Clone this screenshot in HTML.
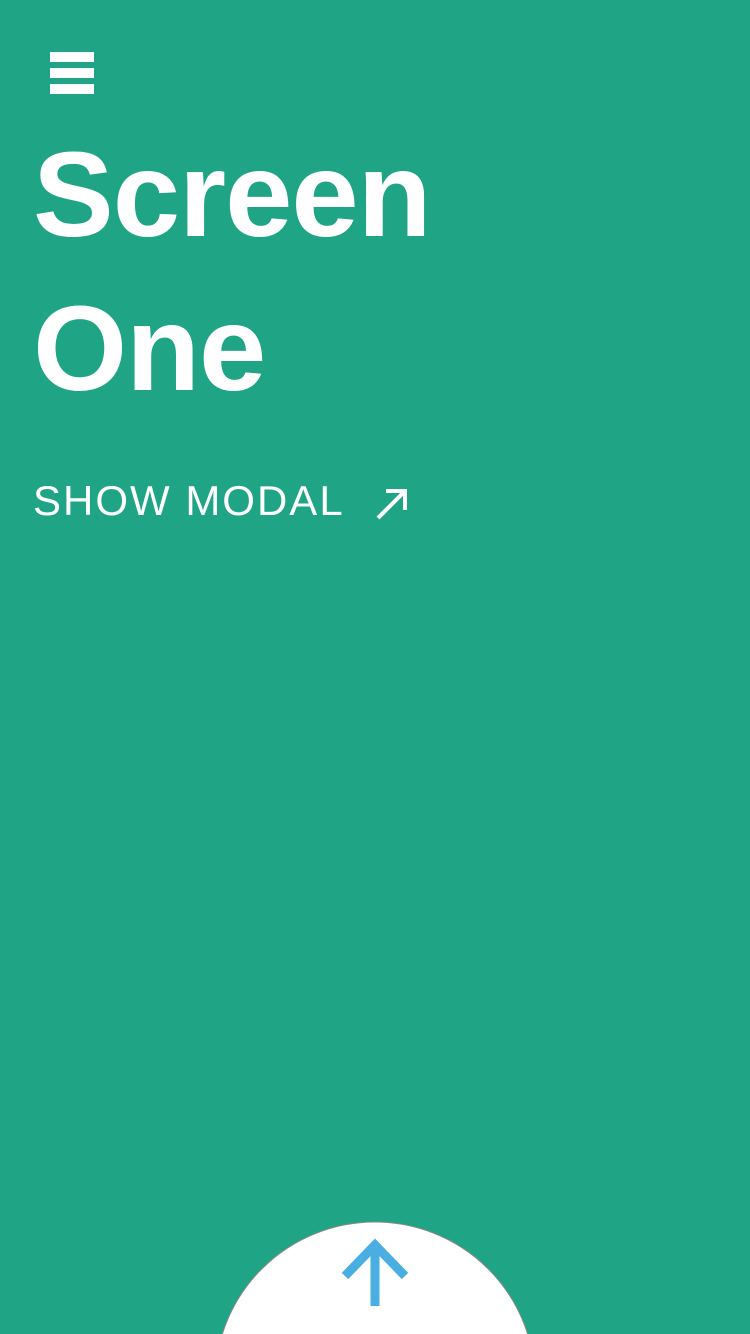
<!DOCTYPE html>
<html><head><style>
html,body{margin:0;padding:0;width:750px;height:1334px;overflow:hidden}
body{background:#20a486;position:relative;font-family:"Liberation Sans",sans-serif;color:#fff}
.bar{position:absolute;left:50px;width:44px;height:10px;background:#fff}
.t{position:absolute;left:33px;font-weight:bold;font-size:121px;letter-spacing:-1px;line-height:1;white-space:nowrap}
.sm{position:absolute;left:33px;top:480px;font-size:42px;line-height:1;white-space:nowrap;letter-spacing:2px}
</style></head><body>
<div class="bar" style="top:52px"></div>
<div class="bar" style="top:68px"></div>
<div class="bar" style="top:84px"></div>
<div class="t" style="top:134px">Screen</div>
<div class="t" style="top:288px">One</div>
<div class="sm">SHOW MODAL</div>
<svg style="position:absolute;left:370px;top:482px" width="44" height="44" viewBox="0 0 44 44"><path d="M8 36 L35 9 M16 9 H35 V28" stroke="#fff" stroke-width="4" fill="none"/></svg>
<svg style="position:absolute;left:0;top:1200px;display:block" width="750" height="134" viewBox="0 0 750 134">
<circle cx="375" cy="182" r="160" fill="#fff" stroke="#888" stroke-width="1"/>
<path d="M375 106 V44 M345 76 L375 45 L405 76" stroke="#4aaee2" stroke-width="9" fill="none"/>
</svg>
</body></html>
